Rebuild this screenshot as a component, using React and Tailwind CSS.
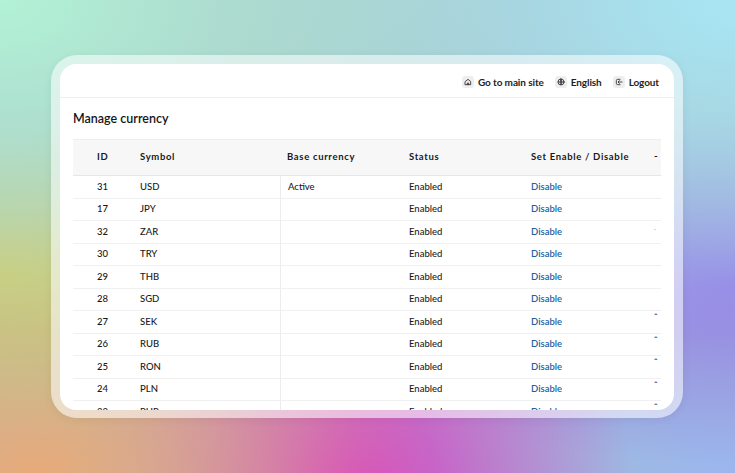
import React from "react";

const rows = [
  ["31", "USD", "Active", ""],
  ["17", "JPY", "", ""],
  ["32", "ZAR", "", "dot"],
  ["30", "TRY", "", ""],
  ["29", "THB", "", ""],
  ["28", "SGD", "", ""],
  ["27", "SEK", "", "caret"],
  ["26", "RUB", "", "caret"],
  ["25", "RON", "", "caret"],
  ["24", "PLN", "", "caret"],
  ["23", "PHP", "", "caret"],
];

function HomeIcon() {
  return (
    <svg width="8" height="8" viewBox="0 0 24 24" fill="none" stroke="#333" strokeWidth="2.6" strokeLinecap="round" strokeLinejoin="round">
      <path d="M4 10.5 12 4l8 6.5V20H4z" />
      <path d="M10 20v-5h4v5" />
    </svg>
  );
}

function GlobeIcon() {
  return (
    <svg width="8" height="8" viewBox="0 0 24 24" fill="none" stroke="#333" strokeWidth="2.6" strokeLinecap="round">
      <circle cx="12" cy="12" r="9" />
      <path d="M3 12h18" />
      <path d="M12 3c3 3 3 15 0 18c-3-3-3-15 0-18z" />
    </svg>
  );
}

function LogoutIcon() {
  return (
    <svg width="8" height="8" viewBox="0 0 24 24" fill="none" stroke="#333" strokeWidth="2.6" strokeLinecap="round" strokeLinejoin="round">
      <path d="M15 4H8a4 4 0 0 0-4 4v8a4 4 0 0 0 4 4h7" />
      <path d="M21 12H10" />
      <path d="M13 8l-4 4 4 4" />
    </svg>
  );
}

function NavItem({ icon, label }) {
  return (
    <div className="flex items-center gap-[4px]">
      <span className="flex h-[12px] w-[12px] items-center justify-center rounded-[3px] bg-[#eeeeee]">
        {icon}
      </span>
      <span className="text-[10px] font-bold leading-none tracking-[-0.01em] text-[#1e1e1e]">{label}</span>
    </div>
  );
}

export default function App() {
  return (
    <div
      className="relative h-[473px] w-[735px] overflow-hidden bg-[#a6bfc6] bg-[radial-gradient(ellipse_at_0%_0%,#b2f2d6_0%,transparent_50%),radial-gradient(ellipse_at_100%_0%,#a8e6f4_0%,transparent_50%),radial-gradient(ellipse_at_0%_58%,#cdc872_0%,transparent_42%),radial-gradient(ellipse_at_5%_100%,#e8aa78_0%,transparent_40%),radial-gradient(ellipse_at_48%_108%,#d83cc4_0%,transparent_52%),radial-gradient(ellipse_at_100%_60%,#9580e6_0%,transparent_45%),radial-gradient(ellipse_at_100%_100%,#9ab6ee_0%,transparent_38%)] pl-[51px] pt-[55px]"
      style={{ fontFamily: "Lato, 'Open Sans', sans-serif" }}
    >
      <div className="h-[363px] w-[632px] rounded-[26px] bg-white/55 p-[9px] pb-[8px] shadow-[0_2px_10px_rgba(0,0,0,0.06)]">
        <div className="flex h-full w-full flex-col overflow-hidden rounded-[16px] bg-white">
          <div className="flex h-[34px] shrink-0 items-center justify-end gap-[11px] border-b border-[#eeeeee] pr-[15px] pt-[2px]">
            <NavItem icon={<HomeIcon />} label="Go to main site" />
            <NavItem icon={<GlobeIcon />} label="English" />
            <NavItem icon={<LogoutIcon />} label="Logout" />
          </div>
          <div className="px-[13px]">
            <div className="mt-[13px] h-[15px] text-[12.5px] font-semibold leading-[15px] text-[#151515]">
              Manage currency
            </div>
            <div className="mt-[13px] w-[588px] border-t border-[#eeeeee] text-[#1a1a1a]">
              <div className="grid h-[36px] grid-cols-[67px_140px_129px_122px_120px_1fr] items-center border-b border-[#e6e6e6] bg-[#f7f7f7] text-[9.5px] font-bold tracking-[0.07em]">
                <div className="pl-[24px]">ID</div>
                <div>Symbol</div>
                <div className="pl-[7px]">Base currency</div>
                <div>Status</div>
                <div>Set Enable / Disable</div>
                <div className="-mt-[5px] pl-[3px] text-[10px]">-</div>
              </div>
              {rows.map(([id, sym, base, mark]) => (
                <div
                  key={id}
                  className="grid h-[22.5px] grid-cols-[67px_140px_129px_122px_120px_1fr] items-center border-b border-[#f0f0f0] text-[9.5px] font-medium"
                >
                  <div className="pl-[24px]">{id}</div>
                  <div>{sym}</div>
                  <div className="flex h-full items-center border-l border-[#ececec] pl-[7px]">{base}</div>
                  <div>Enabled</div>
                  <div className="font-semibold text-[#1f5f9e]">Disable</div>
                  <div className="-mt-[8px] pl-[3px] text-[9px] font-bold text-[#2c5a85]">
                    {mark === "caret" ? "ˆ" : mark === "dot" ? <span className="text-[6px] text-[#aab]">·</span> : ""}
                  </div>
                </div>
              ))}
            </div>
          </div>
        </div>
      </div>
    </div>
  );
}
